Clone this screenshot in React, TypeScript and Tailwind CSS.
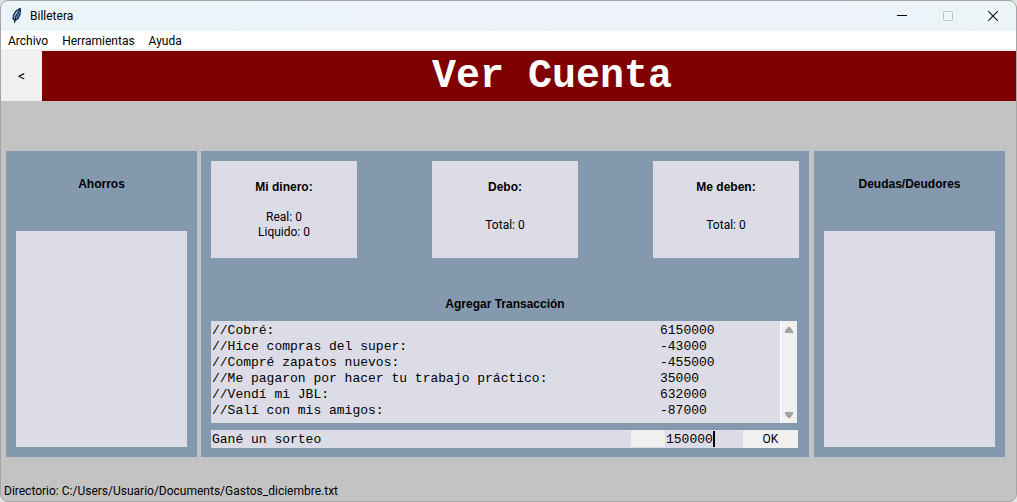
import { useState } from "react";

const menus = ["Archivo", "Herramientas", "Ayuda"];

const transactions = [
  ["//Cobré:", "6150000"],
  ["//Hice compras del super:", "-43000"],
  ["//Compré zapatos nuevos:", "-455000"],
  ["//Me pagaron por hacer tu trabajo práctico:", "35000"],
  ["//Vendí mi JBL:", "632000"],
  ["//Salí con mis amigos:", "-87000"],
];

const heading = "font-['Liberation_Sans',Arial,sans-serif] text-[12px] leading-4 font-bold";
const mono = "font-['Liberation_Mono','Courier_New',monospace] text-[13px] leading-4";

function Feather() {
  return (
    <svg width="12" height="18" viewBox="0 0 12 18" aria-hidden="true">
      <path d="M9 1.500L5 4L2.500 8L2 12L4 13.500L7 11.500L9 7.500L9.500 2Z" fill="#5c9ee0" stroke="#1c2733" strokeWidth="1.200" />
      <path d="M8.500 3L5 9L3.500 16" fill="none" stroke="#10161f" strokeWidth="1.100" />
      <path d="M8 6L5.500 11" stroke="#2f6fb5" strokeWidth="1.400" />
      <path d="M6.500 4.500L4 8.500" stroke="#a9d3f5" strokeWidth="1" />
    </svg>
  );
}

function TitleBar() {
  return (
    <header className="flex h-[30px] shrink-0 items-center bg-linear-to-r from-[#ebf5f8] via-[#eef3fa] to-[#edf4f8] pl-[10px]">
      <Feather />
      <span className="ml-[7px] flex-1 text-[12px] leading-4">Billetera</span>
      <button aria-label="Minimizar" className="flex h-full w-[46px] items-center justify-center">
        <svg width="10" height="10" viewBox="0 0 10 10" shapeRendering="crispEdges"><path d="M0 4.500H10" stroke="#000" /></svg>
      </button>
      <button aria-label="Maximizar" disabled className="flex h-full w-[45px] items-center justify-center">
        <svg width="10" height="10" viewBox="0 0 10 10"><rect x=".5" y=".5" width="9" height="9" rx=".7" fill="none" stroke="#bfc5c9" /></svg>
      </button>
      <button aria-label="Cerrar" className="flex h-full w-[46px] items-center justify-center">
        <svg width="10" height="10" viewBox="0 0 10 10"><path d="M0 0L10 10M10 0L0 10" stroke="#111" strokeWidth="1.100" /></svg>
      </button>
    </header>
  );
}

function SidePanel({ title }: { title: string }) {
  return (
    <section className="flex w-[191px] shrink-0 flex-col bg-[#8499ae] p-[10px]">
      <h2 className={`${heading} mt-[15px] text-center`}>{title}</h2>
      <div className="mt-[39px] min-h-[216px] flex-1 bg-[#dcdce6]" />
    </section>
  );
}

function Card({ title, lines }: { title: string; lines: string[] }) {
  return (
    <article className="flex h-[97px] w-[146px] flex-col bg-[#dcdce6] pt-[18px] text-center">
      <h2 className={heading}>{title}</h2>
      <div className="flex h-[60px] flex-col justify-center text-[12px] leading-[15px]">
        {lines.map((line) => (
          <p key={line}>{line}</p>
        ))}
      </div>
    </article>
  );
}

function ScrollBar() {
  return (
    <div className="flex w-[17px] shrink-0 flex-col justify-between border-l border-white bg-[#f0f0f0]">
      <button aria-label="Subir" className="flex h-[18px] items-center justify-center">
        <svg width="8" height="6" viewBox="0 0 8 6"><path d="M3 0H5L8 4V6H0V4Z" fill="#a3a3a3" /></svg>
      </button>
      <button aria-label="Bajar" className="flex h-4 items-center justify-center">
        <svg width="8" height="6" viewBox="0 0 8 6"><path d="M0 0H8V2L5 6H3L0 2Z" fill="#a3a3a3" /></svg>
      </button>
    </div>
  );
}

function Transactions() {
  const [detail, setDetail] = useState("Gané un sorteo");
  const [amount, setAmount] = useState("150000");
  return (
    <>
      <div className="mr-px flex h-[102px] bg-[#dcdce6]">
        <div className="min-w-0 flex-1 overflow-hidden px-px pt-[2px]">
          <table className={`${mono} w-full table-fixed border-collapse text-left`}>
            <tbody>
              {transactions.map(([name, value]) => (
                <tr key={name}>
                  <td className="w-[448px] p-0">{name}</td>
                  <td className="p-0">{value}</td>
                </tr>
              ))}
            </tbody>
          </table>
        </div>
        <ScrollBar />
      </div>
      <form className="mt-[7px] flex h-[18px] bg-[#dcdce6]" onSubmit={(e) => e.preventDefault()}>
        <input aria-label="Detalle" value={detail} onChange={(e) => setDetail(e.target.value)} className={`${mono} min-w-0 flex-1 pt-px pl-px outline-none`} />
        <div className="mb-px w-[34px] bg-[#f0f0f0]" />
        <div className="flex w-[78px] items-center pl-px">
          <input aria-label="Monto" value={amount} onChange={(e) => setAmount(e.target.value)} className={`${mono} w-[47px] pt-px outline-none`} />
          <span className="h-4 w-[2px] bg-black" />
        </div>
        <button type="submit" className="w-[55px] bg-[#f0f0f0] text-[12px] leading-4">OK</button>
      </form>
    </>
  );
}

export default function App() {
  return (
    <div className="min-h-screen bg-[#e4e4e4] font-[Roboto,'Segoe_UI',sans-serif] text-black">
      <div className="flex min-h-screen flex-col overflow-hidden rounded-lg border border-[#a5a5a5] bg-[#c3c3c3]">
        <TitleBar />
        <nav className="flex h-5 shrink-0 gap-[14px] border-b-2 border-[#f0f0f0] bg-white pt-px pl-[7px]">
          {menus.map((menu) => (
            <button key={menu} className="text-[12px] leading-4">{menu}</button>
          ))}
        </nav>
        <div className="flex h-[50px] shrink-0 bg-[#800000]">
          <button aria-label="Volver" className="w-[41px] bg-[#f0f0f0] text-[14px]">&lt;</button>
          <h1 className="flex-1 pt-px pl-[46px] text-center font-['Liberation_Mono','Courier_New',monospace] text-[40px] leading-[50px] font-bold text-white">Ver Cuenta</h1>
        </div>
        <main className="mt-[50px] flex pr-[11px] pl-[5px]">
          <SidePanel title="Ahorros" />
          <section className="mr-[5px] ml-1 min-w-0 flex-1 bg-[#8499ae] px-[10px] pt-[10px] pb-[9px]">
            <div className="flex justify-between">
              <Card title="Mi dinero:" lines={["Real: 0", "Liquido: 0"]} />
              <Card title="Debo:" lines={["Total: 0"]} />
              <Card title="Me deben:" lines={["Total: 0"]} />
            </div>
            <h2 className={`${heading} mt-[38px] mb-[9px] text-center`}>Agregar Transacción</h2>
            <div className="mr-px">
              <Transactions />
            </div>
          </section>
          <SidePanel title="Deudas/Deudores" />
        </main>
        <footer className="mt-auto pb-[2px] pl-[3px] text-[12px] leading-4">Directorio: C:/Users/Usuario/Documents/Gastos_diciembre.txt</footer>
      </div>
    </div>
  );
}
